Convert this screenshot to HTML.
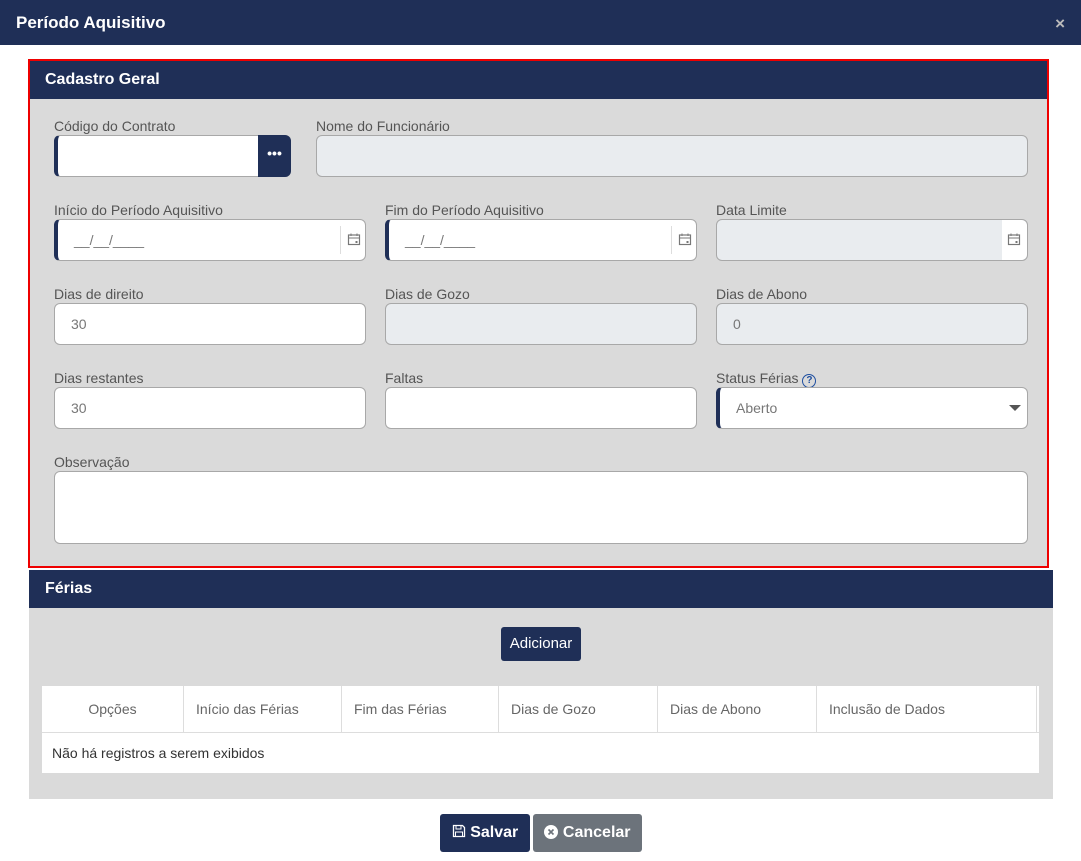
<!DOCTYPE html><html><head><meta charset="utf-8"><style>
*{box-sizing:border-box;margin:0;padding:0}
body{width:1081px;height:861px;background:#fff;font-family:"Liberation Sans",sans-serif;position:relative;overflow:hidden}
.a{position:absolute}
.hd{background:#1f2f57;color:#fff;font-weight:bold}
.lb{position:absolute;font-size:14px;color:#555}
.in{position:absolute;height:42px;border:1px solid #a8a8a8;border-radius:6px;background:#fff;font-size:14px;color:#777;padding-left:16px;line-height:40px}
.dis{background:#e9ecef}
.lft{border-left:4px solid #1f2f57}
.cal{position:absolute;right:0;top:6px;width:25px;height:28px;border-left:1px solid #ddd}
.th{position:absolute;top:0;height:46px;line-height:46px;font-size:14px;color:#666;border-right:1px solid #ddd;padding-left:12px}
.btn{position:absolute;color:#fff;font-weight:bold;font-size:16px;border-radius:3px;text-align:center;line-height:38px}
</style></head><body>
<div class="a hd" style="left:0;top:0;width:1081px;height:45px;font-size:17px;padding:13px 16px">Período Aquisitivo<span style="position:absolute;right:16px;top:14px;color:#bbb;font-size:17px">×</span></div>
<div class="a" style="left:28px;top:59px;width:1021px;height:509px;border:2px solid #e00;background:#dadada"></div>
<div class="a hd" style="left:30px;top:61px;width:1017px;height:38px;font-size:16px;padding:10px 15px">Cadastro Geral</div>
<svg width="0" height="0" style="position:absolute"><defs><symbol id="c" viewBox="0 0 14 14"><rect x="1.5" y="3" width="11" height="9.5" fill="none" stroke="#777" stroke-width="1.2"/><line x1="1.5" y1="6" x2="12.5" y2="6" stroke="#777"/><line x1="4" y1="1.5" x2="4" y2="4" stroke="#777"/><line x1="10" y1="1.5" x2="10" y2="4" stroke="#777"/><rect x="8.5" y="9" width="2" height="2" fill="#777"/></symbol></defs></svg>
<div class="lb" style="left:54px;top:118px">Código do Contrato</div>
<div class="in lft" style="left:54px;top:135px;width:237px"></div>
<div class="a" style="left:258px;top:135px;width:33px;height:42px;background:#1f2f57;border-radius:0 6px 6px 0;color:#fff;text-align:center;font-weight:bold;line-height:36px;font-size:14px">•••</div>
<div class="lb" style="left:316px;top:118px">Nome do Funcionário</div>
<div class="in dis" style="left:316px;top:135px;width:712px"></div>
<div class="lb" style="left:54px;top:202px">Início do Período Aquisitivo</div>
<div class="in lft" style="left:54px;top:219px;width:312px">__/__/____<div class="cal"><svg width="14" height="14" style="margin:6px"><use href="#c"/></svg></div></div>
<div class="lb" style="left:385px;top:202px">Fim do Período Aquisitivo</div>
<div class="in lft" style="left:385px;top:219px;width:312px">__/__/____<div class="cal"><svg width="14" height="14" style="margin:6px"><use href="#c"/></svg></div></div>
<div class="lb" style="left:716px;top:202px">Data Limite</div>
<div class="in dis" style="left:716px;top:219px;width:312px"><div class="cal" style="background:#fff;top:0;height:40px;border:0;border-radius:0 6px 6px 0"><svg width="14" height="14" style="margin:12px 5px"><use href="#c"/></svg></div></div>
<div class="lb" style="left:54px;top:286px">Dias de direito</div>
<div class="in" style="left:54px;top:303px;width:312px">30</div>
<div class="lb" style="left:385px;top:286px">Dias de Gozo</div>
<div class="in dis" style="left:385px;top:303px;width:312px"></div>
<div class="lb" style="left:716px;top:286px">Dias de Abono</div>
<div class="in dis" style="left:716px;top:303px;width:312px">0</div>
<div class="lb" style="left:54px;top:370px">Dias restantes</div>
<div class="in" style="left:54px;top:387px;width:312px">30</div>
<div class="lb" style="left:385px;top:370px">Faltas</div>
<div class="in" style="left:385px;top:387px;width:312px"></div>
<div class="lb" style="left:716px;top:370px">Status Férias <span style="display:inline-block;width:14px;height:14px;border:1.5px solid #1f4fa0;border-radius:50%;font-size:10px;text-align:center;line-height:11px;color:#1f4fa0;font-weight:bold">?</span></div>
<div class="in lft" style="left:716px;top:387px;width:312px">Aberto<span style="position:absolute;right:6px;top:17px;border:6px solid transparent;border-top:6px solid #555"></span></div>
<div class="lb" style="left:54px;top:454px">Observação</div>
<div class="in" style="left:54px;top:471px;width:974px;height:73px"></div>
<div class="a hd" style="left:29px;top:570px;width:1024px;height:38px;font-size:16px;padding:10px 16px">Férias</div>
<div class="a" style="left:29px;top:608px;width:1024px;height:191px;background:#dadada"></div>
<div class="btn" style="left:501px;top:627px;width:80px;height:34px;line-height:34px;background:#1f2f57;font-weight:normal;font-size:15px">Adicionar</div>
<div class="a" style="left:42px;top:686px;width:997px;height:87px;background:#fff">
<div class="th" style="left:0;width:142px;text-align:center;padding:0">Opções</div>
<div class="th" style="left:142px;width:158px">Início das Férias</div>
<div class="th" style="left:300px;width:157px">Fim das Férias</div>
<div class="th" style="left:457px;width:159px">Dias de Gozo</div>
<div class="th" style="left:616px;width:159px">Dias de Abono</div>
<div class="th" style="left:775px;width:220px">Inclusão de Dados</div>
<div class="a" style="left:0;top:46px;width:997px;border-top:1px solid #ddd;font-size:14px;color:#333;padding:12px 10px">Não há registros a serem exibidos</div>
</div>
<div class="btn" style="left:440px;top:814px;width:90px;background:#1f2f57">
<svg width="14" height="14" viewBox="0 0 14 14" style="vertical-align:-1px"><path d="M1.5 1.5h9l2 2v9h-11z" fill="none" stroke="#fff" stroke-width="1.3"/><rect x="4" y="1.5" width="5" height="3.5" fill="none" stroke="#fff"/><rect x="3.5" y="8" width="7" height="4.5" fill="none" stroke="#fff"/></svg> Salvar</div>
<div class="btn" style="left:533px;top:814px;width:109px;background:#6c737b">
<svg width="14" height="14" viewBox="0 0 14 14" style="vertical-align:-2px"><circle cx="7" cy="7" r="7" fill="#fff"/><path d="M4.5 4.5l5 5M9.5 4.5l-5 5" stroke="#6c737b" stroke-width="1.6"/></svg> Cancelar</div>
</body></html>
